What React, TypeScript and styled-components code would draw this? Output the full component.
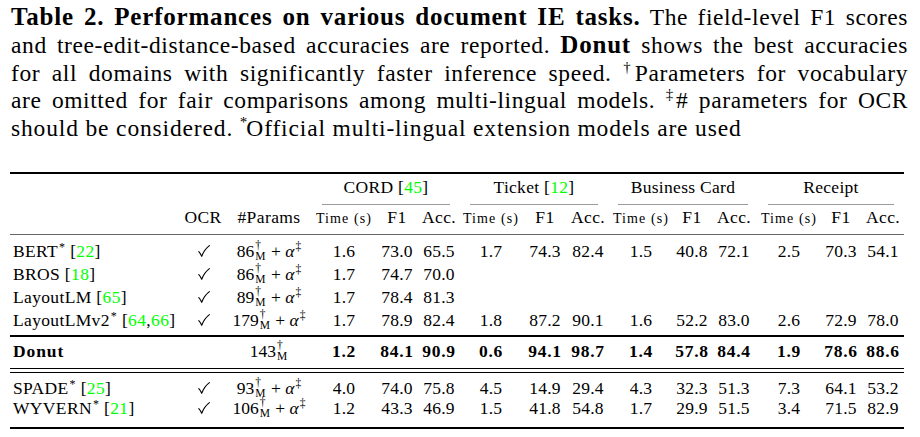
import React from "react";
import styled, { createGlobalStyle } from "styled-components";

const GlobalStyle = createGlobalStyle`
  html, body { margin: 0; padding: 0; background: #ffffff; }
`;

const SERIF = `"Liberation Serif", "Times New Roman", serif`;

const COLS =
  "170px 46px 86px 64px 42px 42px 62px 46px 40px 66px 36px 48px 62px 42px 42px";

const Page = styled.div`
  width: 920px;
  height: 437px;
  box-sizing: border-box;
  padding: 4px 0 0 10px;
  overflow: hidden;
  font-family: ${SERIF};
  color: #000;
  background: #fff;
`;

const Caption = styled.div`
  width: 897px;
  height: 139px;
  margin-left: 1px;
  font-family: ${SERIF};
  font-size: 23.5px;
  line-height: 27.75px;
  letter-spacing: 0.6px;
`;

const CapLine = styled.div<{ $last?: boolean }>`
  text-align: ${({ $last }) => ($last ? "left" : "justify")};
  text-align-last: ${({ $last }) => ($last ? "left" : "justify")};
  letter-spacing: ${({ $last }) => ($last ? "0.85px" : "0.6px")};
`;

const Strong = styled.b`
  font-weight: 700;
  font-size: 25px;
  line-height: 26px;
  letter-spacing: 0.8px;
`;

const CapSup = styled.span`
  font-size: 15px;
  line-height: 0;
  vertical-align: 9px;
  letter-spacing: 0;
  margin-right: -1px;
`;

const Table = styled.div`
  margin-top: 29px;
  width: 894px;
  border-top: 2px solid #000;
  border-bottom: 2px solid #000;
  font-family: ${SERIF};
  font-size: 17.5px;
`;

const GroupRow = styled.div`
  display: grid;
  grid-template-columns: ${COLS};
  height: 31px;
  line-height: 26px;
`;

const Blank = styled.div<{ $span: number }>`
  grid-column: span ${({ $span }) => $span};
`;

const GroupCell = styled.div`
  grid-column: span 3;
  margin: 0 10px;
  height: 30px;
  border-bottom: 1px solid #9a9a9a;
  text-align: center;
  letter-spacing: 0.3px;
  white-space: nowrap;
`;

const HeadRow = styled.div`
  display: grid;
  grid-template-columns: ${COLS};
  align-items: baseline;
  height: 29px;
  line-height: 24px;
  border-bottom: 1px solid #666;
`;

const HeadCell = styled.div<{ $small?: boolean }>`
  text-align: center;
  white-space: nowrap;
  font-size: ${({ $small }) => ($small ? "14px" : "17.5px")};
  letter-spacing: ${({ $small }) => ($small ? "1.1px" : "0.4px")};
`;

const Section = styled.div<{ $pt: number; $pb: number }>`
  padding: ${({ $pt }) => $pt}px 0 ${({ $pb }) => $pb}px;
`;

const FirstSection = styled(Section)`
  border-bottom: 2px solid #000;
`;

const DonutSection = styled(Section)`
  border-bottom: 1px solid #000;
  margin-bottom: 3px;
`;

const LastSection = styled(Section)`
  border-top: 1px solid #000;
`;

const DataRow = styled.div<{ $h: number }>`
  display: grid;
  grid-template-columns: ${COLS};
  align-items: baseline;
  height: ${({ $h }) => $h}px;
  line-height: ${({ $h }) => $h}px;
`;

const NameCell = styled.div<{ $bold?: boolean }>`
  padding-left: 3px;
  white-space: nowrap;
  letter-spacing: ${({ $bold }) => ($bold ? "0.9px" : "0.35px")};
  font-weight: ${({ $bold }) => ($bold ? 700 : 400)};
`;

const CenterCell = styled.div`
  text-align: center;
  white-space: nowrap;
`;

const ValCell = styled.div<{ $bold?: boolean }>`
  text-align: center;
  white-space: nowrap;
  font-weight: ${({ $bold }) => ($bold ? 700 : 400)};
  letter-spacing: ${({ $bold }) => ($bold ? "0.7px" : "0.2px")};
`;

const Cite = styled.span`
  color: #00ff00;
`;

const NameSup = styled.span`
  font-size: 12px;
  line-height: 0;
  vertical-align: 6px;
  margin-left: 1px;
`;

const CheckSvg = styled.svg`
  width: 12px;
  height: 12px;
  vertical-align: 0;
  margin-left: 2px;
  overflow: visible;
`;

const CheckMark: React.FC = () => (
  <CheckSvg viewBox="0 0 12 12" aria-label="✓">
    <path
      d="M0.8 6.6 C1.8 7.6 2.8 9.2 3.7 11.3 C5.4 6.8 7.8 3.2 11.4 0.6"
      fill="none"
      stroke="#000"
      strokeWidth="1.15"
      strokeLinecap="round"
      strokeLinejoin="round"
    />
  </CheckSvg>
);

const Scripts = styled.span`
  display: inline-flex;
  flex-direction: column;
  vertical-align: 8px;
  font-size: 11.5px;
  margin: 0 1px 0 1px;
  text-align: left;
`;

const ScriptTop = styled.span`
  line-height: 10px;
`;

const ScriptBot = styled.span`
  line-height: 12px;
`;

const Alpha = styled.i`
  font-style: italic;
`;

const MathSup = styled.span`
  font-size: 11.5px;
  line-height: 0;
  vertical-align: 7px;
  margin-left: 1px;
`;

type Row = {
  name: string;
  star?: boolean;
  cites: string[];
  params: string;
  ocr: boolean;
  vals: string[];
};

const upper: Row[] = [
  {
    name: "BERT",
    star: true,
    cites: ["22"],
    params: "86",
    ocr: true,
    vals: ["1.6", "73.0", "65.5", "1.7", "74.3", "82.4", "1.5", "40.8", "72.1", "2.5", "70.3", "54.1"],
  },
  {
    name: "BROS",
    cites: ["18"],
    params: "86",
    ocr: true,
    vals: ["1.7", "74.7", "70.0", "", "", "", "", "", "", "", "", ""],
  },
  {
    name: "LayoutLM",
    cites: ["65"],
    params: "89",
    ocr: true,
    vals: ["1.7", "78.4", "81.3", "", "", "", "", "", "", "", "", ""],
  },
  {
    name: "LayoutLMv2",
    star: true,
    cites: ["64", "66"],
    params: "179",
    ocr: true,
    vals: ["1.7", "78.9", "82.4", "1.8", "87.2", "90.1", "1.6", "52.2", "83.0", "2.6", "72.9", "78.0"],
  },
];

const lower: Row[] = [
  {
    name: "SPADE",
    star: true,
    cites: ["25"],
    params: "93",
    ocr: true,
    vals: ["4.0", "74.0", "75.8", "4.5", "14.9", "29.4", "4.3", "32.3", "51.3", "7.3", "64.1", "53.2"],
  },
  {
    name: "WYVERN",
    star: true,
    cites: ["21"],
    params: "106",
    ocr: true,
    vals: ["1.2", "43.3", "46.9", "1.5", "41.8", "54.8", "1.7", "29.9", "51.5", "3.4", "71.5", "82.9"],
  },
];

const donutVals = ["1.2", "84.1", "90.9", "0.6", "94.1", "98.7", "1.4", "57.8", "84.4", "1.9", "78.6", "88.6"];

const Params: React.FC<{ n: string; alpha: boolean }> = ({ n, alpha }) => (
  <>
    {n}
    <Scripts>
      <ScriptTop>†</ScriptTop>
      <ScriptBot>M</ScriptBot>
    </Scripts>
    {alpha && (
      <>
        {" + "}
        <Alpha>α</Alpha>
        <MathSup>‡</MathSup>
      </>
    )}
  </>
);

const Name: React.FC<{ row: Row }> = ({ row }) => (
  <NameCell>
    {row.name}
    {row.star && <NameSup>*</NameSup>} [
    {row.cites.map((c, i) => (
      <React.Fragment key={c}>
        {i > 0 && ","}
        <Cite>{c}</Cite>
      </React.Fragment>
    ))}
    ]
  </NameCell>
);

const DataLine: React.FC<{ row: Row; h: number }> = ({ row, h }) => (
  <DataRow $h={h}>
    <Name row={row} />
    <CenterCell>{row.ocr && <CheckMark />}</CenterCell>
    <CenterCell>
      <Params n={row.params} alpha />
    </CenterCell>
    {row.vals.map((v, i) => (
      <ValCell key={i}>{v}</ValCell>
    ))}
  </DataRow>
);

const groups: { label: string; cite?: string }[] = [
  { label: "CORD", cite: "45" },
  { label: "Ticket", cite: "12" },
  { label: "Business Card" },
  { label: "Receipt" },
];

export default function App() {
  return (
    <>
      <GlobalStyle />
      <Page>
        <Caption>
          <CapLine>
            <Strong>Table 2. Performances on various document IE tasks.</Strong> The field-level F1 scores
          </CapLine>
          <CapLine>
            and tree-edit-distance-based accuracies are reported. <Strong>Donut</Strong> shows the best accuracies
          </CapLine>
          <CapLine>
            for all domains with significantly faster inference speed. <CapSup>†</CapSup>Parameters for vocabulary
          </CapLine>
          <CapLine>
            are omitted for fair comparisons among multi-lingual models. <CapSup>‡</CapSup># parameters for OCR
          </CapLine>
          <CapLine $last>
            should be considered. <CapSup>*</CapSup>Official multi-lingual extension models are used
          </CapLine>
        </Caption>
        <Table>
          <GroupRow>
            <Blank $span={3} />
            {groups.map((g) => (
              <GroupCell key={g.label}>
                {g.label}
                {g.cite && (
                  <>
                    {" ["}
                    <Cite>{g.cite}</Cite>]
                  </>
                )}
              </GroupCell>
            ))}
          </GroupRow>
          <HeadRow>
            <HeadCell />
            <HeadCell>OCR</HeadCell>
            <HeadCell>#Params</HeadCell>
            {groups.map((g) => (
              <React.Fragment key={g.label}>
                <HeadCell $small>Time (s)</HeadCell>
                <HeadCell>F1</HeadCell>
                <HeadCell>Acc.</HeadCell>
              </React.Fragment>
            ))}
          </HeadRow>
          <FirstSection $pt={5} $pb={3}>
            {upper.map((r) => (
              <DataLine key={r.name} row={r} h={23} />
            ))}
          </FirstSection>
          <DonutSection $pt={3} $pb={5}>
            <DataRow $h={23}>
              <NameCell $bold>Donut</NameCell>
              <CenterCell />
              <CenterCell>
                <Params n="143" alpha={false} />
              </CenterCell>
              {donutVals.map((v, i) => (
                <ValCell key={i} $bold>
                  {v}
                </ValCell>
              ))}
            </DataRow>
          </DonutSection>
          <LastSection $pt={4} $pb={10}>
            {lower.map((r) => (
              <DataLine key={r.name} row={r} h={20} />
            ))}
          </LastSection>
        </Table>
      </Page>
    </>
  );
}
